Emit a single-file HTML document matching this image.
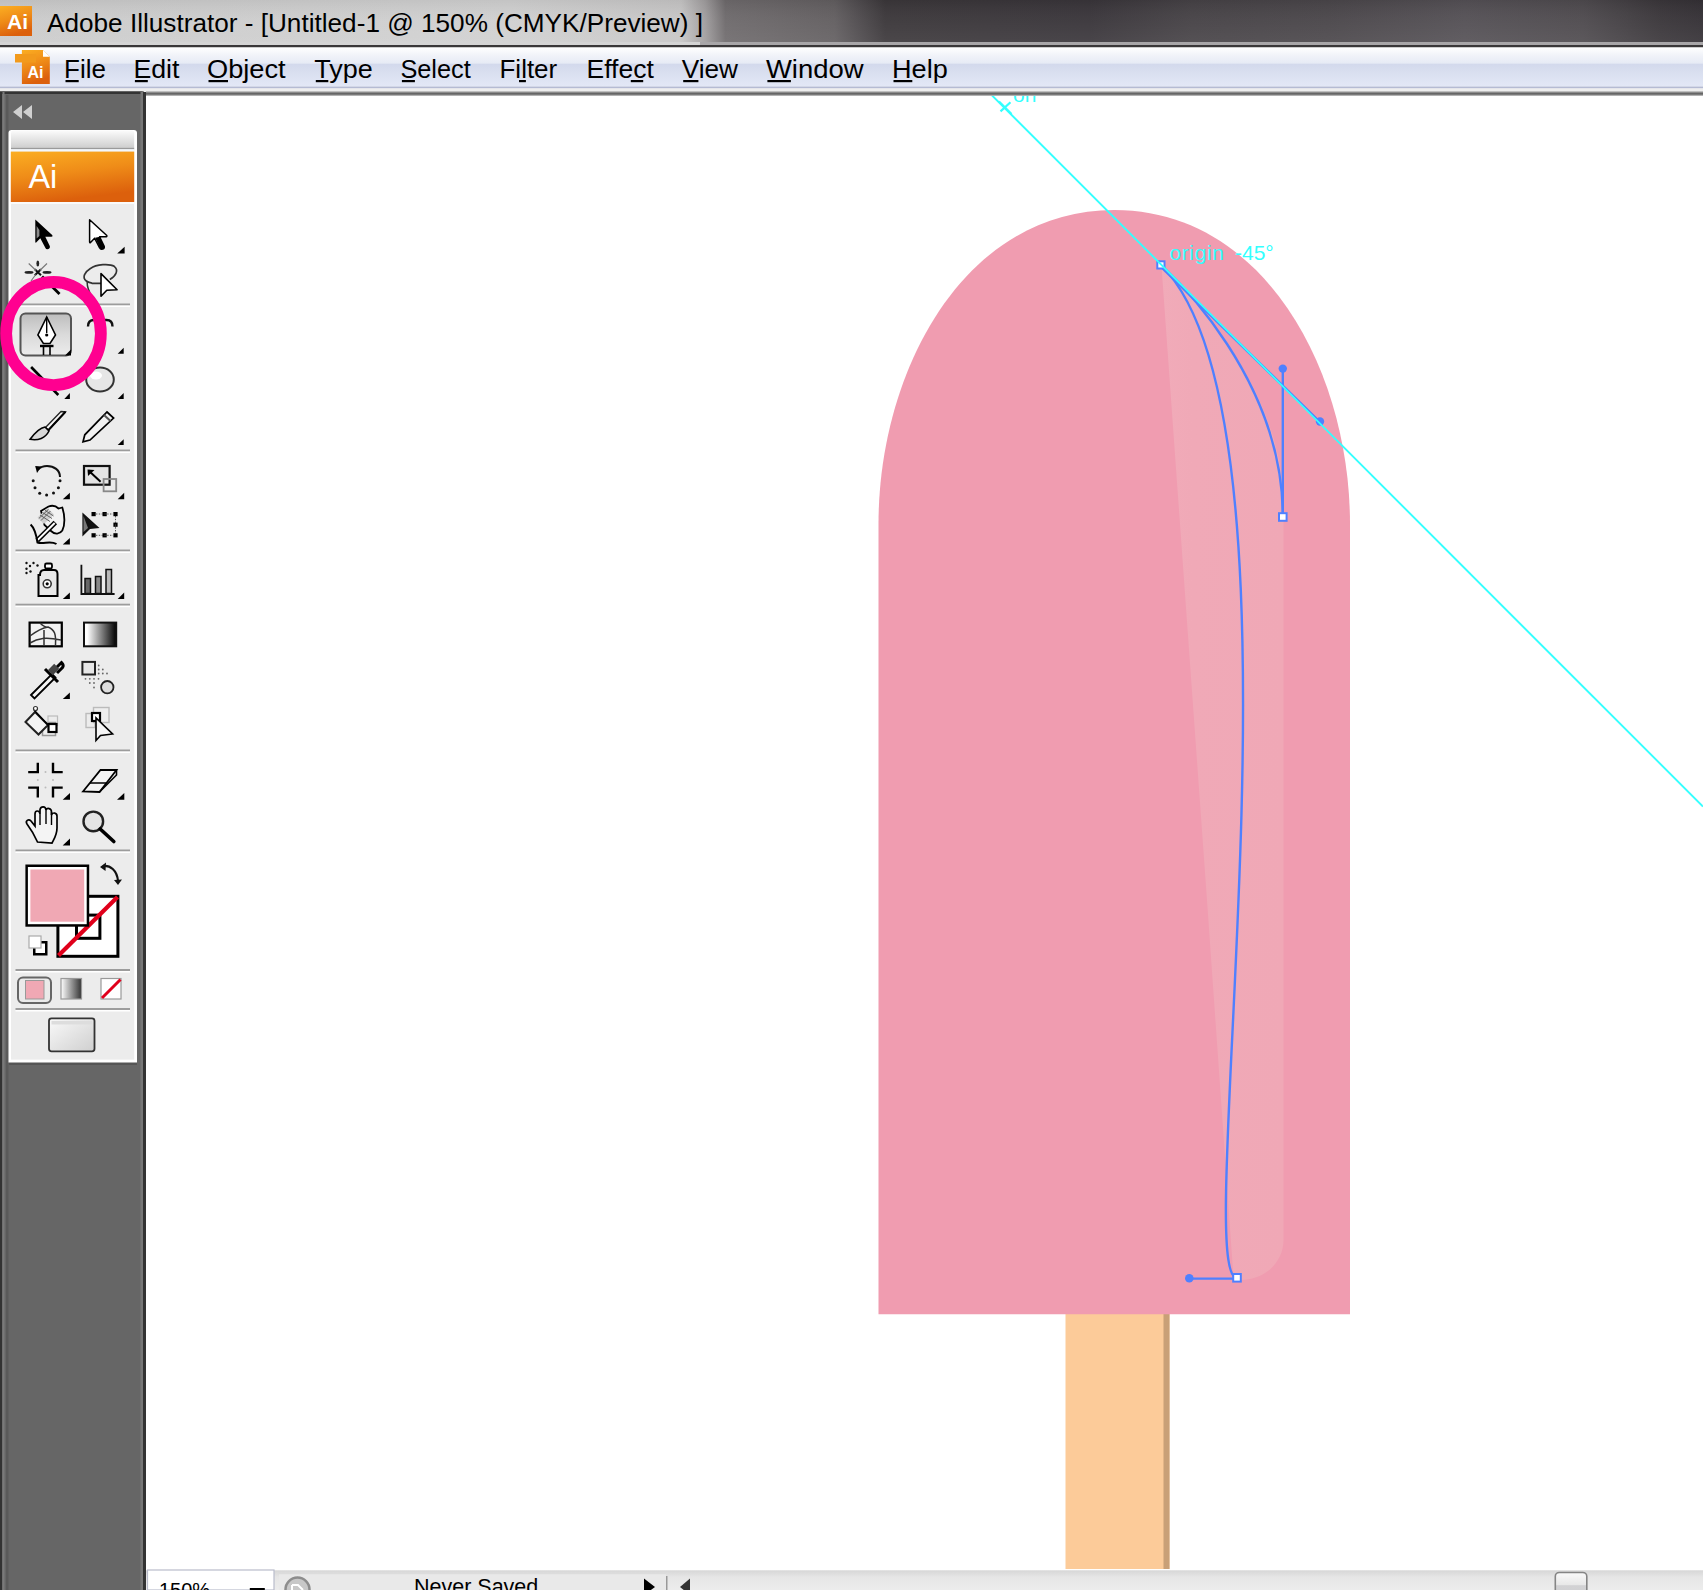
<!DOCTYPE html>
<html><head><meta charset="utf-8">
<style>
*{margin:0;padding:0}
html,body{width:1703px;height:1590px;overflow:hidden;background:#fff}
svg{position:absolute;left:0;top:0;display:block}
text{font-family:"Liberation Sans",sans-serif}
</style></head><body>
<svg width="1703" height="1590" viewBox="0 0 1703 1590">
<defs>
 <linearGradient id="gTitle" x1="0" y1="0" x2="1703" y2="0" gradientUnits="userSpaceOnUse">
  <stop offset="0" stop-color="#cbcbcb"/>
  <stop offset="0.30" stop-color="#d0d0d0"/>
  <stop offset="0.400" stop-color="#c6c5c5"/>
  <stop offset="0.414" stop-color="#a09d9e"/>
  <stop offset="0.426" stop-color="#6e6a6c"/>
  <stop offset="0.49" stop-color="#625e60"/>
  <stop offset="0.505" stop-color="#4e4a4d"/>
  <stop offset="0.52" stop-color="#3b373a"/>
  <stop offset="0.64" stop-color="#39353a"/>
  <stop offset="0.70" stop-color="#464246"/>
  <stop offset="0.78" stop-color="#4a464a"/>
  <stop offset="0.86" stop-color="#545055"/>
  <stop offset="0.93" stop-color="#4e4a4e"/>
  <stop offset="0.975" stop-color="#3a363a"/>
  <stop offset="1" stop-color="#343035"/>
 </linearGradient>
 <linearGradient id="gTitleV" x1="0" y1="0" x2="0" y2="1">
  <stop offset="0" stop-color="#000" stop-opacity="0.06"/>
  <stop offset="0.5" stop-color="#fff" stop-opacity="0.04"/>
  <stop offset="1" stop-color="#fff" stop-opacity="0.08"/>
 </linearGradient>
 <linearGradient id="gMenu" x1="0" y1="0" x2="0" y2="1">
  <stop offset="0" stop-color="#ffffff"/>
  <stop offset="0.2" stop-color="#f1f3f9"/>
  <stop offset="0.4" stop-color="#e7ebf5"/>
  <stop offset="0.43" stop-color="#d3d9ec"/>
  <stop offset="0.6" stop-color="#d8deef"/>
  <stop offset="1" stop-color="#e3e8f6"/>
 </linearGradient>
 <linearGradient id="gOrange" x1="0" y1="0" x2="0.3" y2="1">
  <stop offset="0" stop-color="#fbae22"/>
  <stop offset="0.5" stop-color="#ef8c18"/>
  <stop offset="1" stop-color="#dc600c"/>
 </linearGradient>
 <linearGradient id="gHeader" x1="0" y1="0" x2="0" y2="1">
  <stop offset="0" stop-color="#fbfbfb"/>
  <stop offset="1" stop-color="#cfcfcf"/>
 </linearGradient>
 <linearGradient id="gStatus" x1="0" y1="0" x2="0" y2="1">
  <stop offset="0" stop-color="#d6d6d6"/>
  <stop offset="0.35" stop-color="#e6e6e6"/>
  <stop offset="1" stop-color="#ececec"/>
 </linearGradient>
 <linearGradient id="gHl" x1="0" y1="0" x2="1" y2="0">
  <stop offset="0" stop-color="#f1abb9"/>
  <stop offset="0.25" stop-color="#f0a9b7"/>
  <stop offset="1" stop-color="#f0a8b6"/>
 </linearGradient>
</defs>

<!-- ===== TITLE BAR ===== -->
<rect x="0" y="0" width="1703" height="42" fill="url(#gTitle)"/>
<rect x="0" y="0" width="1703" height="42" fill="url(#gTitleV)"/>
<rect x="0" y="42" width="1703" height="3" fill="#a8a6a8"/>
<rect x="0" y="42" width="700" height="3" fill="#d4d4d4"/>
<rect x="0" y="45" width="1703" height="2.5" fill="#393738"/>
<!-- title app icon -->
<rect x="0" y="6" width="32" height="30" fill="url(#gOrange)"/>
<text x="7" y="28.5" font-size="21" font-weight="bold" fill="#fff">Ai</text>
<text x="47" y="31.7" font-size="26.1" fill="#000" textLength="656" lengthAdjust="spacingAndGlyphs">Adobe Illustrator - [Untitled-1 @ 150% (CMYK/Preview) ]</text>

<!-- ===== MENU BAR ===== -->
<rect x="0" y="47.5" width="1703" height="39" fill="url(#gMenu)"/>
<rect x="0" y="86.5" width="1703" height="2" fill="#b5bbd3"/>
<rect x="0" y="88.5" width="1703" height="3.3" fill="#eeeeee"/>

<!-- menubar doc icon -->
<path d="M21.9 50 H43 L49.8 56.8 V84 H21.9 Z" fill="url(#gOrange)"/>
<path d="M43 50 L49.8 56.8 H43 Z" fill="#fff"/>
<rect x="15" y="54" width="21" height="8.5" fill="#f29a1c"/>
<text x="27.5" y="78.3" font-size="16" font-weight="bold" fill="#fff">Ai</text>
<g font-size="25.3" fill="#000">
 <text id="m_File" x="64.0" y="77.5" textLength="41.9" lengthAdjust="spacingAndGlyphs">File</text><rect x="65.5" y="80" width="13.2" height="2.2"/>
 <text id="m_Edit" x="133.4" y="77.5" textLength="46.1" lengthAdjust="spacingAndGlyphs">Edit</text><rect x="134.9" y="80" width="12.9" height="2.2"/>
 <text id="m_Object" x="207.0" y="77.5" textLength="78.6" lengthAdjust="spacingAndGlyphs">Object</text><rect x="208.5" y="80" width="19.5" height="2.2"/>
 <text id="m_Type" x="314.3" y="77.5" textLength="58.6" lengthAdjust="spacingAndGlyphs">Type</text><rect x="315.8" y="80" width="12.5" height="2.2"/>
 <text id="m_Select" x="400.4" y="77.5" textLength="70.4" lengthAdjust="spacingAndGlyphs">Select</text><rect x="401.9" y="80" width="13.0" height="2.2"/>
 <text id="m_Filter" x="499.5" y="77.5" textLength="57.7" lengthAdjust="spacingAndGlyphs">Filter</text><rect x="519.0" y="80" width="6.9" height="2.2"/>
 <text id="m_Effect" x="586.5" y="77.5" textLength="67.3" lengthAdjust="spacingAndGlyphs">Effect</text><rect x="630.8" y="80" width="12.4" height="2.2"/>
 <text id="m_View" x="681.7" y="77.5" textLength="56.3" lengthAdjust="spacingAndGlyphs">View</text><rect x="683.2" y="80" width="15.2" height="2.2"/>
 <text id="m_Window" x="765.9" y="77.5" textLength="97.7" lengthAdjust="spacingAndGlyphs">Window</text><rect x="767.4" y="80" width="23.5" height="2.2"/>
 <text id="m_Help" x="892.0" y="77.5" textLength="55.8" lengthAdjust="spacingAndGlyphs">Help</text><rect x="893.5" y="80" width="18.8" height="2.2"/>
</g>

<!-- ===== LEFT DARK PANEL ===== -->
<rect x="0" y="92" width="146" height="1498" fill="#666"/>
<rect x="0" y="92" width="2" height="1498" fill="#333"/>
<path d="M0 91.3 H142 Q145.5 91.3 145.5 95 V96 H143 V94 H0 Z" fill="#333"/>
<rect x="2.5" y="92" width="2" height="1498" fill="#7a7a7a"/>
<rect x="6" y="95" width="2.5" height="1495" fill="#5a5a5a"/>
<rect x="140.5" y="92" width="2.5" height="1498" fill="#777"/>
<rect x="143" y="92" width="3" height="1498" fill="#333"/>
<!-- collapse arrows -->
<path d="M13 112 L22 105 V119 Z M23 112 L32 105 V119 Z" fill="#d0d0d0"/>

<!-- ===== CANVAS ===== -->
<rect x="146" y="95.7" width="1557" height="1474" fill="#fff"/>

<!-- ===== STATUS BAR ===== -->
<rect x="146" y="1570.3" width="1557" height="19.7" fill="url(#gStatus)"/>
<rect x="147.5" y="1570" width="126.5" height="20" fill="#fff" stroke="#b9bccb" stroke-width="1.2"/>
<text x="159" y="1597" font-size="20" fill="#000">150%</text>
<rect x="249.8" y="1588" width="15" height="3" fill="#000"/>
<rect x="279" y="1573" width="387" height="17" fill="#e9e9e9"/>
<rect x="279" y="1573" width="387" height="1.2" fill="#dcdcdc"/>
<circle cx="297.5" cy="1589.5" r="12" fill="#c8c8c8" stroke="#8d8d8d" stroke-width="2.5"/><path d="M292 1585 H298 L303 1590 M292 1585 V1592" fill="none" stroke="#fff" stroke-width="2"/>
<text x="414" y="1594.2" font-size="21.5" fill="#000">Never Saved</text>
<path d="M644 1578.5 L655 1587 L644 1595 Z" fill="#000"/>
<rect x="666" y="1576" width="1.5" height="14" fill="#999"/>
<path d="M690 1578.5 L680 1587 L690 1595 Z" fill="#333"/>
<linearGradient id="gThumb" x1="0" y1="0" x2="0" y2="1"><stop offset="0" stop-color="#fafafa"/><stop offset="0.55" stop-color="#e8e8e8"/><stop offset="0.6" stop-color="#d2d2d4"/><stop offset="1" stop-color="#d0d0d2"/></linearGradient><rect x="1555.3" y="1572.5" width="31.5" height="22" rx="4" fill="url(#gThumb)" stroke="#858585" stroke-width="1.6"/>

<clipPath id="cvClip"><rect x="146" y="95.5" width="1557" height="1474.8"/></clipPath>
<g clip-path="url(#cvClip)">
<!-- ===== ARTWORK ===== -->
<rect x="1065.5" y="1300" width="104" height="269" fill="#fccb99"/>
<rect x="1163.5" y="1314" width="6" height="255" fill="#c9a077"/>
<path d="M878.5 1314.3 V524 C878.5 372 963.25 210.1 1114.25 210.1 C1265.25 210.1 1350 372 1350 524 V1314.3 Z" fill="#f09cb0"/>

<!-- highlight -->
<path d="M1161.5 266 C1165.2 269.7 1283.5 374 1283.5 506 V1240 C1283.5 1262 1265 1280 1240 1280 C1236 1280 1234 1278 1233 1270 L1207 900 L1161.5 266 Z" fill="url(#gHl)"/>
<!-- blue path -->
<g fill="none" stroke="#4f80ff" stroke-width="2.4">
 <path d="M1161.5 265.5 C1165.2 269.2 1282.8 373.6 1282.8 516"/>
 <path d="M1161.5 265.5 C1320.5 424 1189.3 1277.8 1237 1277.8"/>
 <path d="M1282.8 368.4 V516"/>
 <path d="M1189.3 1278.6 H1237"/>
 <path d="M1160.5 266.5 L1320 422"/>
</g>
<g fill="#4f80ff">
 <circle cx="1282.8" cy="368.6" r="4.2"/>
 <circle cx="1320" cy="421.5" r="4.2"/>
 <circle cx="1189.3" cy="1278.3" r="4.3"/>
</g>
<rect x="1279" y="513.2" width="7.6" height="7.6" fill="#fff" stroke="#4f80ff" stroke-width="2"/>
<rect x="1233.2" y="1274" width="7.6" height="7.6" fill="#fff" stroke="#4f80ff" stroke-width="2"/>
<!-- cyan smart guide -->
<rect x="1157.3" y="261.3" width="7.2" height="7.2" fill="#fff" stroke="#4f80ff" stroke-width="2"/>
<line x1="990.6" y1="94" x2="1703" y2="806.6" stroke="#3ff" stroke-width="1.9"/>
<path d="M999 101.5 L1011.5 114 M1000.5 111.4 L1010.5 102.3" stroke="#3ff" stroke-width="2.2"/>

<g fill="#3ff" font-size="21">
 <text x="1169.5" y="260.4" letter-spacing="0.6">origin</text>
 <text x="1235" y="260.4">-45°</text>
 <text x="1013" y="101.7">on</text>
</g>


</g>
<rect x="146" y="91.3" width="1557" height="1" fill="#aaa"/><rect x="146" y="92.3" width="1557" height="2.6" fill="#666"/><rect x="146" y="94.9" width="1557" height="1" fill="#aaa"/>
<g id="tools">
 <!-- panel -->
 <path d="M9 133 Q9 130 12 130 H134 Q137 130 137 133 V1065 H9 Z" fill="#555"/>
 <path d="M8.5 133 Q8.5 130 11.5 130 H134 Q137 130 137 133 V1062.5 H8.5 Z" fill="#fff"/>
 <rect x="11" y="148" width="123.2" height="911.6" fill="#ececec"/>
 <path d="M11 133 Q11 130.6 13 130.6 H132 Q134.2 130.6 134.2 133 V147.6 H11 Z" fill="url(#gHeader)"/>
 <rect x="11" y="147.6" width="123.2" height="1.7" fill="#9a9a9a"/>
 <rect x="11" y="149.3" width="123.2" height="2.3" fill="#f4f8fc"/>
 <rect x="10.8" y="151.6" width="123.4" height="50.4" fill="url(#gOrange)"/>
 <rect x="10.8" y="202" width="123.4" height="2" fill="#fafafa"/>
 <text x="28.4" y="188.4" font-size="32.4" fill="#fff">Ai</text>
 <!-- separators -->
 <g fill="#9c9c9c">
  <rect x="15.5" y="303.5" width="114.5" height="2"/>
  <rect x="15.5" y="449.5" width="114.5" height="2"/>
  <rect x="15.5" y="549.5" width="114.5" height="2"/>
  <rect x="15.5" y="603.7" width="114.5" height="2"/>
  <rect x="15.5" y="749.5" width="114.5" height="2"/>
  <rect x="15.5" y="849.5" width="114.5" height="2"/>
  <rect x="15.5" y="969" width="114.5" height="2"/>
  <rect x="15.5" y="1008" width="114.5" height="2"/>
 </g>
 <g fill="#fff">
  <rect x="15.5" y="305.5" width="114.5" height="1.5"/>
  <rect x="15.5" y="451.5" width="114.5" height="1.5"/>
  <rect x="15.5" y="551.5" width="114.5" height="1.5"/>
  <rect x="15.5" y="605.7" width="114.5" height="1.5"/>
  <rect x="15.5" y="751.5" width="114.5" height="1.5"/>
  <rect x="15.5" y="851.5" width="114.5" height="1.5"/>
  <rect x="15.5" y="971" width="114.5" height="1.5"/>
  <rect x="15.5" y="1010" width="114.5" height="1.5"/>
 </g>
 <!-- small flyout triangles -->
 <g fill="#000">
  <path d="M124.6 246.7 V253.5 H117.2 Z"/>
  <path d="M123.7 347.8 V353.8 H117.7 Z"/>
  <path d="M69.9 393 V399 H64.3 Z"/>
  <path d="M123.7 393 V399 H117.7 Z"/>
  <path d="M123.7 439.3 V444.9 H117.7 Z"/>
  <path d="M69.9 492.8 V499.3 H62.8 Z"/>
  <path d="M124.2 492.8 V499.3 H117.7 Z"/>
  <path d="M69.9 538 V544.5 H62.8 Z"/>
  <path d="M69.9 592.5 V599 H62.8 Z"/>
  <path d="M124.2 592.5 V599 H117.7 Z"/>
  <path d="M69.9 692.6 V699 H62.8 Z"/>
  <path d="M70 793 V799.7 H62.7 Z"/>
  <path d="M124.3 793 V799.7 H117 Z"/>
  <path d="M70 838.4 V845.4 H62.7 Z"/>
 </g>
 <!-- selection tools -->
 <path d="M35.3 219.5 L52.4 235.3 Q53 236.8 51.2 236.8 H45.3 L49.9 246.3 Q50.3 248.3 48.5 249 L47.3 249.3 Q45.9 249.3 45.3 247.8 L40.3 238.2 L36.2 242.5 Q35.3 243 35.3 241.8 Z" fill="#000"/>
 <path d="M36.6 226 V238.5 L39.4 236 V230 Z" fill="#8a8a8a"/>
 <path d="M89.6 219.8 L106.8 235.5 Q107.3 236.8 105.5 236.8 H99.6 L104.2 246.3 Q104.6 248.3 102.8 249 L101.6 249.3 Q100.2 249.3 99.6 247.8 L94.6 238.2 L90.5 242.5 Q89.6 243 89.6 241.8 Z" fill="#fff" stroke="#000" stroke-width="1.5" stroke-linejoin="round"/>
 <path d="M95.2 237.8 L99.8 236.8 L104.2 246.3 Q104.6 248.3 102.8 249 L101.6 249.3 Q100.2 249.3 99.6 247.8 Z" fill="#000"/>
 <!-- magic wand -->
 <g fill="#222">
  <ellipse cx="29" cy="272.4" rx="4.5" ry="1.4"/><ellipse cx="47" cy="272.4" rx="4.5" ry="1.4"/>
  <ellipse cx="37.8" cy="263.5" rx="1.4" ry="3"/>
 </g>
 <path d="M34.8 269.2 L41 275.3 M41 269.2 L34.8 275.3" stroke="#111" stroke-width="2"/>
 <path d="M28.7 263.5 L36 270.5 M47 263.5 L39.8 270.5 M31 281 L35.8 274.5" stroke="#777" stroke-width="1.1"/>
 <path d="M42 276.5 L59.5 294" stroke="#000" stroke-width="2.8"/>
 <!-- lasso -->
 <path d="M109.8 279.5 C116 276 119 270 114.2 266.3 C110 263.5 96 264 90.7 268.3 C85 272 81.5 277 86.3 281 C88 282.5 90 282.5 92 283.3 H101" fill="none" stroke="#333" stroke-width="1.7"/>
 <path d="M87.5 281 C86.5 285 88 289 90 293" fill="none" stroke="#333" stroke-width="1.6"/>
 <path d="M101 273.6 V296.2 L106.8 290.3 L117.1 289.8 Z" fill="#fff" stroke="#000" stroke-width="1.6" stroke-linejoin="round"/>
 <!-- pen (selected) -->
 <linearGradient id="gPen" x1="0" y1="0" x2="0" y2="1"><stop offset="0" stop-color="#bdbdbd"/><stop offset="0.5" stop-color="#dadada"/><stop offset="1" stop-color="#ececec"/></linearGradient>
 <rect x="20.5" y="313.5" width="50.5" height="42" rx="5" fill="url(#gPen)" stroke="#555" stroke-width="2"/>
 <path d="M46.7 317 L55.5 335 L50 343.5 H43.4 L37.9 335 Z" fill="#fff" stroke="#000" stroke-width="1.6"/>
 <path d="M46.7 317 V333" stroke="#000" stroke-width="1.4"/>
 <circle cx="46.7" cy="335" r="1.6" fill="#000"/>
 <path d="M40 346 H53.5" stroke="#000" stroke-width="2.4"/>
 <path d="M43.5 347 V355 M50 347 V355" stroke="#000" stroke-width="1.6"/>
 <path d="M71 349.5 V355.5 H65 Z" fill="#000"/>
 <!-- type -->
 <path d="M88 326.5 Q88 320 94 320 M112.5 326.5 Q112.5 320 106.5 320 M94 320 H106.5" fill="none" stroke="#111" stroke-width="2.4"/>
 <path d="M100.3 320 V340" fill="none" stroke="#111" stroke-width="2.4"/>
 <!-- line -->
 <path d="M31.1 367 L58.3 395" stroke="#000" stroke-width="2.6"/>
 <!-- ellipse -->
 <ellipse cx="100" cy="379.5" rx="13.8" ry="12" fill="#e6e6e6" stroke="#333" stroke-width="2"/>
 <ellipse cx="96" cy="375.5" rx="6" ry="4" fill="#fff"/>
 <!-- paintbrush -->
 <path d="M61 411.5 L65.5 411.8 L48.5 430 L45.5 427.5 Z" fill="#f6f6f6" stroke="#222" stroke-width="1.3"/>
 <path d="M65.5 411.8 L48.5 430" stroke="#000" stroke-width="2"/>
 <path d="M45 427 C39 428 34 434 30.1 439.3 C38 441 45.5 438 49 431 Z" fill="#d8d8d8" stroke="#000" stroke-width="1.6"/>
 <!-- pencil -->
 <path d="M107 412 L113.6 418 L90 440 L83 441.8 L84.8 434.8 Z" fill="#f2f2f2" stroke="#000" stroke-width="1.7"/>
 <path d="M104 415 L110.5 421" stroke="#555" stroke-width="2"/>
 <!-- rotate -->
 <g fill="#111">
  <circle cx="33.2" cy="480.8" r="1.5"/><circle cx="35" cy="487.8" r="1.5"/><circle cx="39.7" cy="493.2" r="1.5"/>
  <circle cx="46.6" cy="495" r="1.5"/><circle cx="53.5" cy="492.9" r="1.5"/><circle cx="58.4" cy="487.8" r="1.5"/><circle cx="60" cy="480.8" r="1.5"/>
 </g>
 <path d="M60 477 C60 470 54 466 47 466 C43 466 40 467.5 38 469.5" fill="none" stroke="#111" stroke-width="2"/>
 <path d="M35.2 466 L41.5 466.5 L37 473 Z" fill="#000"/>
 <!-- scale -->
 <rect x="84" y="466" width="25.6" height="18.7" fill="#e4e4e4" stroke="#111" stroke-width="2.2"/>
 <path d="M88.5 470.5 L100.6 481.7" stroke="#000" stroke-width="2"/>
 <path d="M87.5 469.6 L94.5 470 L88 476 Z" fill="#000"/>
 <rect x="103.6" y="479" width="12.6" height="12.3" fill="none" stroke="#888" stroke-width="1.8"/>
 <!-- warp -->
 <path d="M41 511 L48.5 506.5 C52.5 505 56 506 58.5 508.5 L62.3 507.5 C64.8 515 65.3 525 62.3 530.5 C60 534 55 535 51 531 L44.5 525 Z" fill="#f2f2f2" stroke="#000" stroke-width="1.8"/>
 <path d="M37.5 517.5 L47.5 508 L54 514.5 L44 524 Z" fill="#cfcfcf"/>
 <path d="M40 515 L50 521.5 M42.5 512.5 L52 518.5 M45 510.3 L53.5 516 M41 520.5 L50.5 511 M38.8 518.5 L48.5 509.3" stroke="#555" stroke-width="0.9"/>
 <path d="M37.2 540.5 L55.3 522.4" stroke="#000" stroke-width="5"/>
 <path d="M37.8 539.9 L54.7 523" stroke="#fff" stroke-width="2"/>
 <path d="M30.6 524.4 C34.5 528 36.5 536 37.5 542.5 C44 544.5 50 540 56.5 544" fill="none" stroke="#000" stroke-width="2"/>
 <!-- free transform -->
 <g fill="#000">
  <rect x="91.5" y="512" width="4.2" height="4.2"/><rect x="102.5" y="512" width="4.2" height="4.2"/><rect x="113.4" y="512" width="4.2" height="4.2"/>
  <rect x="113.4" y="522.6" width="4.2" height="4.2"/><rect x="91.5" y="533.2" width="4.2" height="4.2"/><rect x="102.5" y="533.2" width="4.2" height="4.2"/><rect x="113.4" y="533.2" width="4.2" height="4.2"/>
 </g>
 <path d="M96 514 H113 M115.5 516 V533 M96 535.3 H113" stroke="#444" stroke-width="0.9" stroke-dasharray="1.4 1.4"/>
 <path d="M82.4 512.4 V536.5 L90 529 L99.5 528 Z" fill="#111"/>
 <path d="M83.5 516 V532 L88 528" fill="#777"/>
 <!-- symbol sprayer -->
 <g fill="#111">
  <circle cx="26.5" cy="563" r="1.2"/><circle cx="30" cy="566" r="1.2"/><circle cx="33.5" cy="563" r="1.2"/><circle cx="26.5" cy="568.7" r="1.2"/>
  <circle cx="30.5" cy="571.5" r="1.2"/><circle cx="37.5" cy="565.5" r="1.2"/><circle cx="26.5" cy="573" r="1.2"/>
 </g>
 <rect x="45" y="563.5" width="7" height="5" rx="1.5" fill="#fff" stroke="#000" stroke-width="1.8"/>
 <path d="M40 575 Q40 570 44 570 H54 Q57.5 570 57.5 574 V596 H38.5 V575 Z" fill="#e8e8e8" stroke="#000" stroke-width="2"/>
 <circle cx="47.2" cy="583.8" r="4" fill="#fff" stroke="#333" stroke-width="1.6"/>
 <circle cx="47.2" cy="583.8" r="1.6" fill="#000"/>
 <!-- graph -->
 <path d="M81.4 564.7 V594 H114.6" fill="none" stroke="#111" stroke-width="1.8"/>
 <rect x="85" y="578.5" width="5.5" height="15" fill="#666" stroke="#111" stroke-width="1.5"/>
 <rect x="95.5" y="576.5" width="5.5" height="17" fill="#888" stroke="#111" stroke-width="1.5"/>
 <rect x="106" y="569.5" width="5.5" height="24" fill="#bbb" stroke="#111" stroke-width="1.5"/>
 <!-- mesh -->
 <rect x="29.6" y="622.6" width="32.2" height="23.7" fill="#f2f2f2" stroke="#000" stroke-width="2.2"/>
 <path d="M30 636 C38 630 42 628 48 627 M44 630 V645 M48 627 C55 630 56 634 55.5 645 M30 643 C38 638 46 637 61 640 M40 623 C44 627 46 628 49 627" fill="none" stroke="#333" stroke-width="1.5"/>
 <!-- gradient -->
 <linearGradient id="gGr" x1="0" y1="0" x2="1" y2="0"><stop offset="0.1" stop-color="#fff"/><stop offset="1" stop-color="#000"/></linearGradient>
 <rect x="84" y="622.6" width="32.2" height="23.7" fill="url(#gGr)" stroke="#111" stroke-width="2"/>
 <!-- eyedropper -->
 <path d="M31 695 L52 674 L55.5 677.5 L34.5 698.5 Z" fill="#f5f5f5" stroke="#000" stroke-width="1.8"/>
 <path d="M45 669 L58 682 M56 668 L61.5 662.5 C63 664 64 665.5 62.5 667.5 L57 673" fill="none" stroke="#000" stroke-width="3"/>
 <rect x="50" y="665" width="7" height="9" transform="rotate(45 53.5 669.5)" fill="#444"/>
 <!-- blend -->
 <rect x="82.4" y="661.9" width="12.6" height="12.6" fill="#e6e6e6" stroke="#222" stroke-width="2"/>
 <g fill="#666">
  <circle cx="98.7" cy="665.5" r="0.9"/><circle cx="98.7" cy="669.5" r="0.9"/><circle cx="102.8" cy="669.5" r="0.9"/><circle cx="98.7" cy="673.5" r="0.9"/><circle cx="102.8" cy="673.5" r="0.9"/><circle cx="107" cy="673.5" r="0.9"/>
  <circle cx="85.5" cy="678.8" r="0.9"/><circle cx="89.8" cy="678.8" r="0.9"/><circle cx="94" cy="678.8" r="0.9"/><circle cx="98.5" cy="678.8" r="0.9"/>
  <circle cx="89.8" cy="683" r="0.9"/><circle cx="94" cy="683" r="0.9"/><circle cx="94" cy="687.5" r="0.9"/>
 </g>
 <circle cx="107.3" cy="687.2" r="6.2" fill="#ddd" stroke="#222" stroke-width="1.8"/>
 <!-- live paint bucket -->
 <rect x="42.5" y="722.5" width="13" height="13" fill="#f0f0f0" stroke="#999" stroke-width="1.5"/>
 <rect x="48" y="716" width="9.5" height="9.5" fill="none" stroke="#bbb" stroke-width="1.2"/>
 <path d="M25.5 722 L35 712 L48 725 L38.5 734.5 Z" fill="#f4f4f4" stroke="#222" stroke-width="2"/>
 <path d="M34 710 L48 725" stroke="#000" stroke-width="1.5"/>
 <circle cx="35.5" cy="708.5" r="2" fill="#fff" stroke="#333" stroke-width="1.2"/>
 <rect x="48.5" y="724" width="8" height="8" fill="#fff" stroke="#000" stroke-width="2.2"/>
 <!-- live paint selection -->
 <rect x="93.5" y="707.5" width="15.5" height="15" fill="#eee" stroke="#bbb" stroke-width="1.4"/>
 <rect x="86" y="713.5" width="9" height="14" fill="none" stroke="#bbb" stroke-width="1.4"/>
 <rect x="92" y="713" width="8" height="8" fill="#fff" stroke="#000" stroke-width="2.2"/>
 <path d="M96 718 V740.5 L100.5 735.5 L112.6 734 Z" fill="#f5f5f5" stroke="#000" stroke-width="1.6"/>
 <!-- slice -->
 <path d="M37.8 762.8 V772.1 H28.2 M53 762.8 V772.1 H62.7 M28.2 787.6 H37.8 V797.4 M62.7 787.6 H53 V797.4" fill="none" stroke="#000" stroke-width="2.4"/>
 <g fill="#bbb"><circle cx="45.5" cy="772.1" r="1"/><circle cx="45.5" cy="787.6" r="1"/><circle cx="37.8" cy="780" r="1"/><circle cx="53" cy="780" r="1"/></g>
 <!-- eraser -->
 <path d="M83 791.5 L100.5 770 H116.5 L99.5 792 Z" fill="#f5f5f5" stroke="#000" stroke-width="1.8"/>
 <path d="M90 783 H106.5 M116.5 770 V775 L99.5 792" fill="none" stroke="#000" stroke-width="1.6"/>
 <!-- hand -->
 <path d="M37.5 842 C34 834 30 828 27 824 C25 821 28.5 818.5 31 821 L35 826 V814 C35 810 39.5 810 40 814 V809.5 C41 806 45.5 806 46 810 V810 C47 807.5 51.5 808 51.5 812 V815 C52.5 812 57 812.5 57 816 V828 C57 835 54 839 52 843 Z" fill="#f4f4f4" stroke="#000" stroke-width="1.7"/>
 <path d="M40 814 V825 M46 810 V824 M51.5 812 V825" fill="none" stroke="#000" stroke-width="1.4"/>
 <!-- zoom -->
 <circle cx="93.3" cy="821.4" r="9.8" fill="#e4e4e4" stroke="#222" stroke-width="2.4"/>
 <path d="M100.2 829 L113.8 841.5" stroke="#000" stroke-width="3.6" stroke-linecap="round"/>
 <!-- fill / stroke -->
 <rect x="56.4" y="894.8" width="63" height="63" fill="#000"/>
 <rect x="59.4" y="897.8" width="57" height="57" fill="#fff"/>
 <rect x="75" y="913.6" width="26.4" height="26.2" fill="#000"/>
 <rect x="78" y="916.6" width="20.4" height="20.2" fill="#fff"/>
 <path d="M58.5 955.5 L117.5 897" stroke="#e0001b" stroke-width="4.2"/>
 <rect x="25.4" y="864.5" width="63.8" height="62.2" fill="#000"/>
 <rect x="27.9" y="867" width="58.8" height="57.2" fill="#fff"/>
 <rect x="30.4" y="869.5" width="53.8" height="52.2" fill="#f0a8b4"/>
 <!-- swap arrow -->
 <path d="M103 866 C110 865 117 870 118 881" fill="none" stroke="#111" stroke-width="2.2"/>
 <path d="M100 867 L106 862.5 L105.5 871 Z M114 880 L122 879.5 L118 885 Z" fill="#111"/>
 <!-- default colors -->
 <rect x="33" y="941" width="14.5" height="14.5" fill="#000"/>
 <rect x="35.5" y="943.5" width="9.5" height="9.5" fill="#fff"/>
 <rect x="29" y="936" width="12" height="12" fill="#fff" stroke="#aaa" stroke-width="1.2"/>
 <!-- color/gradient/none -->
 <rect x="18" y="977.5" width="33" height="25.5" rx="5" fill="#eaeaea" stroke="#666" stroke-width="2"/>
 <rect x="25.5" y="980.5" width="18.5" height="18.5" fill="#f0a8b4" stroke="#999" stroke-width="1"/>
 <linearGradient id="gGr2" x1="0" y1="0" x2="1" y2="0"><stop offset="0" stop-color="#fff"/><stop offset="1" stop-color="#333"/></linearGradient>
 <rect x="61" y="978.5" width="20.5" height="20.5" fill="url(#gGr2)" stroke="#999" stroke-width="1.2"/>
 <rect x="101" y="978.5" width="20" height="20.5" fill="#fff" stroke="#999" stroke-width="1.2"/>
 <path d="M102 998 L120.5 979.5" stroke="#e0001b" stroke-width="3"/>
 <!-- screen mode -->
 <linearGradient id="gSm" x1="0" y1="0" x2="1" y2="1"><stop offset="0" stop-color="#fafafa"/><stop offset="1" stop-color="#cfcfcf"/></linearGradient>
 <rect x="49" y="1018.3" width="45.5" height="33" rx="2.5" fill="url(#gSm)" stroke="#333" stroke-width="1.8"/>
 <rect x="51.5" y="1021" width="40.5" height="3.5" fill="#ddd"/>
</g>
<!-- pink highlight circle -->
<ellipse cx="53.5" cy="333.6" rx="47.35" ry="51.6" fill="none" stroke="#ff0090" stroke-width="11.8"/>
</svg>
</body></html>
